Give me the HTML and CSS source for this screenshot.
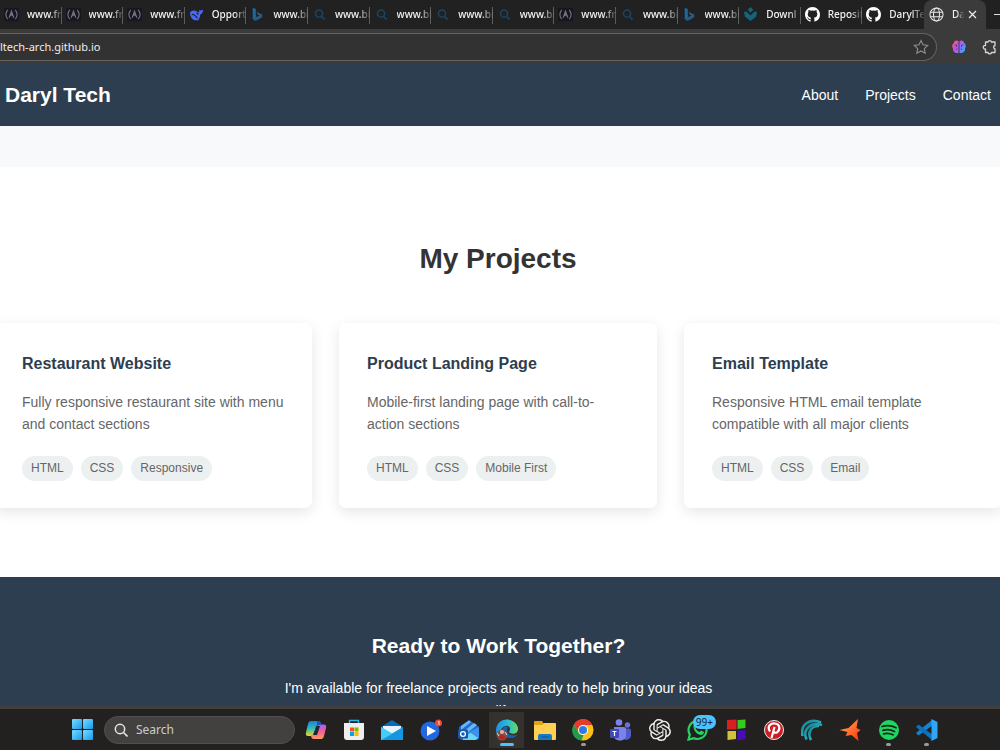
FILE: index.html
```html
<!DOCTYPE html>
<html lang="en">
<head>
<meta charset="utf-8">
<title>Daryl Tech</title>
<link rel="stylesheet" href="styles.css">
</head>
<body>
<svg class="defs" aria-hidden="true">
  <defs>
    <symbol id="fcc" viewBox="0 0 16 14"><rect width="16" height="14" fill="#171722"/><path d="M4 2Q0 7 4 12M12 2q4 5 0 10M5.500 10.500 8 3.500l2.500 7M7 8.500l1-2 1.500 2" fill="none" stroke="#74737c" stroke-width="1.200"/></symbol>
    <symbol id="lens" viewBox="0 0 16 16"><circle cx="7.500" cy="7" r="3.800" fill="none" stroke="#174668" stroke-width="1.600"/><path d="m10 10 3.500 3.500" stroke="#174668" stroke-width="1.700"/></symbol>
    <symbol id="bing" viewBox="0 0 16 16"><path d="m3 1 3 1v9l4-2-2-1-1-3 6 3v3l-7 4-3-2z" fill="#24598a"/><path d="m3 1 3 1v9l-3 2z" fill="#1d6a95"/></symbol>
    <symbol id="github" viewBox="0 0 16 16"><path fill="#fff" d="M8 0C3.580 0 0 3.580 0 8c0 3.540 2.290 6.530 5.470 7.590.4.070.55-.17.55-.38v-1.490c-2.010.37-2.530-.49-2.690-.94-.09-.23-.48-.94-.82-1.130-.28-.15-.68-.52-.01-.53.63-.01 1.080.58 1.230.82.72 1.210 1.870.87 2.330.66.07-.52.28-.87.51-1.070-1.780-.2-3.640-.89-3.640-3.950 0-.87.31-1.590.82-2.150-.08-.2-.36-1.020.08-2.120 0 0 .67-.21 2.200.82a7.400 7.400 0 0 1 4 0c1.530-1.040 2.200-.82 2.200-.82.44 1.100.16 1.920.08 2.120.51.56.82 1.270.82 2.150 0 3.070-1.870 3.750-3.650 3.950.29.25.54.73.54 1.480v2.200c0 .21.15.46.55.38A8 8 0 0 0 16 8c0-4.420-3.580-8-8-8z"/></symbol>
    <linearGradient id="gWin" x2="1" y2="1"><stop stop-color="#7adcff"/><stop offset="1" stop-color="#1599f0"/></linearGradient>
    <linearGradient id="gCopA" x2="0" y2="1"><stop stop-color="#1c7fe8"/><stop offset=".5" stop-color="#2fc0b0"/><stop offset="1" stop-color="#f4d02c"/></linearGradient>
    <linearGradient id="gCopB" x2="0" y2="1"><stop stop-color="#a85cf0"/><stop offset=".5" stop-color="#f0609c"/><stop offset="1" stop-color="#ff9a5a"/></linearGradient>
    <linearGradient id="gEdge" x2="1"><stop stop-color="#1e8fe0"/><stop offset=".5" stop-color="#27b9d8"/><stop offset="1" stop-color="#62dc62"/></linearGradient>
    <linearGradient id="gTeal" x2="1" y2="1"><stop stop-color="#127e92"/><stop offset="1" stop-color="#34d5da"/></linearGradient>
    <linearGradient id="gBrain" x2="1" y2=".6"><stop stop-color="#ff7a4a"/><stop offset=".4" stop-color="#d545e0"/><stop offset="1" stop-color="#3aa5ff"/></linearGradient>
    <linearGradient id="gStar" x2="1" y2="1"><stop stop-color="#ffb95a"/><stop offset="1" stop-color="#ff2d0a"/></linearGradient>
  </defs>
</svg>

<header class="browser">
  <div class="tabs">
    <button class="tab"><svg class="favicon"><use href="#fcc"/></svg><span class="tab-label">www.fr</span></button>
    <button class="tab"><svg class="favicon"><use href="#fcc"/></svg><span class="tab-label">www.fr</span></button>
    <button class="tab"><svg class="favicon"><use href="#fcc"/></svg><span class="tab-label">www.fr</span></button>
    <button class="tab"><svg class="favicon" viewBox="0 0 16 16"><path d="M1 6c2-3 5-3 8-1 1 1 2 1 2 0V3c1 1 2 1 4 0 0 3-1 4-3 5 0 3-1 4-2 5l1 1H6C3 13 1 10 1 6z" fill="#4969fb"/><path d="M3 8c3-1 4 2 6 4M8 6l2 2" fill="none" stroke="#212121" stroke-width="1.200"/></svg><span class="tab-label">Opport</span></button>
    <button class="tab"><svg class="favicon"><use href="#bing"/></svg><span class="tab-label">www.bi</span></button>
    <button class="tab"><svg class="favicon"><use href="#lens"/></svg><span class="tab-label">www.bi</span></button>
    <button class="tab"><svg class="favicon"><use href="#lens"/></svg><span class="tab-label">www.bi</span></button>
    <button class="tab"><svg class="favicon"><use href="#lens"/></svg><span class="tab-label">www.bi</span></button>
    <button class="tab"><svg class="favicon"><use href="#lens"/></svg><span class="tab-label">www.bi</span></button>
    <button class="tab"><svg class="favicon"><use href="#fcc"/></svg><span class="tab-label">www.fr</span></button>
    <button class="tab"><svg class="favicon"><use href="#lens"/></svg><span class="tab-label">www.bi</span></button>
    <button class="tab"><svg class="favicon"><use href="#bing"/></svg><span class="tab-label">www.bi</span></button>
    <button class="tab"><svg class="favicon" viewBox="0 0 16 16"><path d="m8 0 3 3-3 3-3-3z M1 5l3 0 4 4 4-4h3l-1 5-6 5-6-5z" fill="#17637a"/></svg><span class="tab-label">Downl</span></button>
    <button class="tab"><svg class="favicon"><use href="#github"/></svg><span class="tab-label">Reposit</span></button>
    <button class="tab tab-last"><svg class="favicon"><use href="#github"/></svg><span class="tab-label">DarylTe</span></button>
    <div class="tab-active"><svg class="favicon" viewBox="0 0 16 16" fill="none" stroke="#e8e8e8" stroke-width="1.100"><circle cx="8" cy="8" r="7"/><ellipse cx="8" cy="8" rx="3.200" ry="7"/><path d="M1.500 5.500h13M1.500 10.500h13"/></svg><span class="tab-label">Da</span><button class="close" aria-label="Close tab"><svg viewBox="0 0 9 9"><path d="m1 1 7 7M8 1 1 8" stroke="#eee" stroke-width="1.200"/></svg></button></div>
    <button class="minimise" aria-label="Minimise"></button>
  </div>
  <div class="toolbar">
    <div class="address">
      <input class="url" type="text" value="ltech-arch.github.io" aria-label="Address">
      <button class="tool" aria-label="Favourite"><svg viewBox="0 0 16 16"><path d="m8 1.500 2 4.300 4.700.6-3.400 3.200.9 4.700L8 12l-4.200 2.300.9-4.700L1.300 6.400 6 5.800z" fill="none" stroke="#8f8f8f" stroke-width="1.100"/></svg></button>
    </div>
    <button class="tool" aria-label="Brain extension"><svg viewBox="0 0 16 16"><path d="M7.500 2C5 .7 3 2 3 4 1 5 .800 8 2 9.500 1.500 12 4 14.500 7.500 14zM8.500 2C11 .7 13 2 13 4c2 1 2.200 4 1 5.500C14.500 12 12 14.500 8.500 14z" fill="url(#gBrain)"/><path d="M3.500 6h2v2M5 11l1-1.500M12.500 6h-2v2M11 11l-1-1.500" fill="none" stroke="#5b3aa8"/></svg></button>
    <button class="tool" aria-label="Extensions"><svg viewBox="0 0 16 16"><path d="M5 3h2a1.800 1.800 0 0 1 3.500 0H14v3.500a1.800 1.800 0 0 0 0 3.500v3.500h-3.500a1.800 1.800 0 0 1-3.500 0H4.500V10a1.800 1.800 0 1 1 0-3.500V3z" fill="none" stroke="#d6d6d6" stroke-width="1.300" stroke-linejoin="round"/></svg></button>
  </div>
</header>

<main class="site">
  <nav class="nav">
    <span class="logo">Daryl Tech</span>
    <div class="links"><a href="#about">About</a><a href="#projects">Projects</a><a href="#contact">Contact</a></div>
  </nav>
  <div class="band"></div>
  <section class="projects" id="projects">
    <h1>My Projects</h1>
    <div class="cards">
      <article class="card"><h2>Restaurant Website</h2><p>Fully responsive restaurant site with menu and contact sections</p><div class="tags"><span>HTML</span><span>CSS</span><span>Responsive</span></div></article>
      <article class="card"><h2>Product Landing Page</h2><p>Mobile-first landing page with call-to-action sections</p><div class="tags"><span>HTML</span><span>CSS</span><span>Mobile First</span></div></article>
      <article class="card"><h2>Email Template</h2><p>Responsive HTML email template compatible with all major clients</p><div class="tags"><span>HTML</span><span>CSS</span><span>Email</span></div></article>
    </div>
  </section>
  <section class="cta" id="contact">
    <h2>Ready to Work Together?</h2>
    <p>I'm available for freelance projects and ready to help bring your ideas to life.</p>
  </section>
</main>

<footer class="taskbar">
  <button class="start" aria-label="Start"><svg viewBox="0 0 21 21" fill="url(#gWin)"><rect width="10" height="10" rx="1"/><rect x="11" width="10" height="10" rx="1"/><rect y="11" width="10" height="10" rx="1"/><rect x="11" y="11" width="10" height="10" rx="1"/></svg></button>
  <label class="search"><svg viewBox="0 0 14 14"><circle cx="6" cy="6" r="4.700" fill="#4a4a4a" stroke="#e4e4e4" stroke-width="1.500"/><path d="m9.500 9.500 4 4" stroke="#e4e4e4" stroke-width="1.600"/></svg><input type="text" placeholder="Search" aria-label="Search"></label>
  <div class="apps">
    <button class="app" aria-label="Copilot"><svg viewBox="0 0 22 22"><path d="M6 2h7c2 0 2.500 1 3 3l.5 1h-3c-2 0-2.500 1-3 3l-2 6c-.5 1-1 2-3 2H3c-2 0-2.500-1.500-2-3.500L3 5c.5-2 1.500-3 3-3z" fill="url(#gCopA)"/><path d="M16 20H9c-2 0-2.500-1-3-3l1-1c1 0 2-1 2.500-2.500l2-5C12 6.500 13 5.500 15 5.500h4c2 0 2.500 1.500 2 3.500l-2 8c-.5 2-1.500 3-3 3z" fill="url(#gCopB)"/><path d="M12 7h3l-3 9H8z" fill="#1c2536"/><path d="M12 2c3 0 3.500 1 4 4h-4z" fill="#1456c5"/></svg></button>
    <button class="app" aria-label="Store"><svg viewBox="0 0 22 22"><path d="M6.500 5V1.500h9V5" fill="none" stroke="#2ab6e8" stroke-width="1.400"/><path d="M1 4h20v14q0 3-3 3H4q-3 0-3-3z" fill="#efefef"/><path d="M7 8.500h4v4H7z" fill="#f25022"/><path d="M11.500 8.500h4v4h-4z" fill="#7fba00"/><path d="M7 13h4v4H7z" fill="#00a4ef"/><path d="M11.500 13h4v4h-4z" fill="#ffb900"/></svg></button>
    <button class="app" aria-label="Mail"><svg viewBox="0 0 22 22"><path d="M0 8 11 1l11 7v2H0z" fill="#0a6ab3"/><path d="M2 7h18v8H2z" fill="#e8f4fb"/><path d="M0 8v13h22z" fill="#30bdf2"/><path d="M22 8v13H0z" fill="#1596e0"/><path d="m0 8 11 7L0 21z" fill="#42cdf8"/></svg></button>
    <button class="app" aria-label="Media player"><svg viewBox="0 0 22 22"><circle cx="10" cy="12" r="9.500" fill="#2467df"/><path d="M7 7v10l9-5z" fill="#fff"/><circle cx="18.500" cy="4" r="3.500" fill="#e74b38"/><path d="m18 3 1-.8v3.600" fill="none" stroke="#fff" stroke-width=".8"/></svg></button>
    <button class="app" aria-label="Outlook"><svg viewBox="0 0 22 22"><path d="m1 8 10-7 10 7v9q0 4-4 4H5q-4 0-4-4z" fill="#2468d0"/><path d="m3 7 8-5.500L13 3 3 11zM5 13 16 4l3 2L8 15z" fill="#67b9f2"/><path d="m7 15 14-7v9q0 4-4 4H9z" fill="#3c91e9"/><path d="m5 17 8-3 7 5-3 2H5z" fill="#6ad5f5"/><rect y="10.500" width="10" height="9" rx="1" fill="#1459ae"/><circle cx="5" cy="15" r="2.400" fill="none" stroke="#fff" stroke-width="1.300"/></svg></button>
    <button class="app current" aria-label="Edge"><svg viewBox="0 0 22 22"><path d="M0 11C1-3 20-2 22 9c.5 5-4 7-8 5-2-1 0-2 0-4 0-3-3-4-5-3-4 1-5 5-4 12-3-1-5-5-5-8z" fill="url(#gEdge)"/><path d="M9 7C4 10 6 20 15 19c3 0 5-2 6-3-8 2-12-3-9-8z" fill="#1560b7"/><circle cx="6" cy="16" r="5.500" fill="#82524a"/><circle cx="6" cy="13" r="2" fill="#e3b49d"/><path d="M2 19q4-7 8 0l-4 2z" fill="#b62620"/><path d="m1 14 2 3m6-4 2 3" stroke="#d6dce4"/></svg></button>
    <button class="app" aria-label="File Explorer"><svg viewBox="0 0 22 22"><path d="M0 3q0-1 1-1h7l2 3h11v4H0z" fill="#e2a21a"/><path d="M0 6h8l2-2h11q1 0 1 1v15q0 1-1 1H1q-1 0-1-1z" fill="#ffd052"/><path d="M4 21v-4q0-2 2-2h10q2 0 2 2v4z" fill="#1879c4"/><path d="M7 18h8" stroke="#0e538c"/></svg></button>
    <button class="app open" aria-label="Chrome"><svg viewBox="0 0 22 22"><circle cx="11" cy="11" r="10.500" fill="#fbc116"/><path d="M2 5.500C6-2 17-1.500 20.200 6H11L6.500 13.500z" fill="#e33b2e"/><path d="M2 5.500 6.800 14q1.700 2.500 4.700 2L9.500 21.500C1 20-2 12 2 5.500z" fill="#229a4b"/><circle cx="11" cy="11" r="5" fill="#fff"/><circle cx="11" cy="11" r="4" fill="#2c7be5"/></svg></button>
    <button class="app" aria-label="Teams"><svg viewBox="0 0 22 22"><circle cx="9" cy="3.500" r="3.300" fill="#7b83eb"/><circle cx="17.500" cy="6" r="2.700" fill="#6870dd"/><path d="M12 9.500h7q2 0 2 2V17q-1 4-6 4z" fill="#5059c9"/><path d="M4 8h10q2 0 2 2v7c0 6-12 6-12 0z" fill="#7b83eb"/><rect x="0" y="10" width="9" height="9" rx="1" fill="#4049b5"/><path d="M2.500 12.500h4m-2 0V17" stroke="#fff" stroke-width="1.200"/></svg></button>
    <button class="app" aria-label="ChatGPT"><svg viewBox="0 0 24 24"><path fill="#eee" d="M22.282 9.821a5.985 5.985 0 0 0-.516-4.910 6.046 6.046 0 0 0-6.510-2.900A6.065 6.065 0 0 0 4.981 4.182a5.985 5.985 0 0 0-3.998 2.900 6.046 6.046 0 0 0 .743 7.097 5.980 5.980 0 0 0 .511 4.911 6.051 6.051 0 0 0 6.515 2.900A5.985 5.985 0 0 0 13.260 24a6.056 6.056 0 0 0 5.772-4.206 5.990 5.990 0 0 0 3.998-2.900 6.056 6.056 0 0 0-.748-7.073zM13.260 22.430a4.476 4.476 0 0 1-2.876-1.041l.141-.08 4.779-2.758a.795.795 0 0 0 .392-.681v-6.737l2.020 1.169a.071.071 0 0 1 .038.052v5.582a4.504 4.504 0 0 1-4.494 4.494zM3.600 18.304a4.471 4.471 0 0 1-.535-3.014l.142.085 4.783 2.759a.771.771 0 0 0 .780 0l5.843-3.369v2.332a.080.080 0 0 1-.033.062L9.740 19.950a4.499 4.499 0 0 1-6.140-1.646zM2.340 7.896a4.485 4.485 0 0 1 2.366-1.973V11.600a.766.766 0 0 0 .388.677l5.815 3.354-2.020 1.169a.076.076 0 0 1-.071 0l-4.830-2.787A4.504 4.504 0 0 1 2.340 7.872zm16.597 3.855-5.833-3.387L15.119 7.200a.076.076 0 0 1 .071 0l4.830 2.791a4.494 4.494 0 0 1-.676 8.105v-5.678a.79.79 0 0 0-.407-.667zm2.010-3.023-.141-.085-4.774-2.782a.776.776 0 0 0-.785 0L9.409 9.230V6.897a.066.066 0 0 1 .028-.061l4.830-2.787a4.499 4.499 0 0 1 6.680 4.660zM8.307 12.863l-2.020-1.164a.080.080 0 0 1-.038-.057V6.075a4.499 4.499 0 0 1 7.376-3.454l-.142.080L8.704 5.460a.795.795 0 0 0-.393.681zm1.097-2.365 2.602-1.500 2.607 1.500v2.999l-2.597 1.500-2.607-1.500z"/></svg></button>
    <button class="app" aria-label="WhatsApp"><svg viewBox="0 0 22 22"><path d="m1.500 20.500 1.300-5A9 9 0 1 1 7 19.200z" fill="none" stroke="#25d366" stroke-width="2.200"/><path d="M6.500 6c2-2 3 0 3 2l-1 1c1 2 2 3 4 4l1.500-1.500 3 1.500c0 3-3 3.500-5 2.500-3-1-6-5-5.500-9.500z" fill="#25d366"/></svg><span class="badge">99+</span></button>
    <button class="app" aria-label="Colour blocks"><svg viewBox="0 0 22 22"><path d="m2 1 9.500-.5v10H2z" fill="#d82020"/><path d="m12.500 1 8-.5V9l-8 1z" fill="#36c91e"/><path d="M2.500 12h8.500v8l-8.500 1z" fill="#cfc33a"/><path d="M12.500 11.500 20.500 11v9l-8 1.500z" fill="#4a0db5"/></svg></button>
    <button class="app" aria-label="Pinterest"><svg viewBox="0 0 22 22"><circle cx="11" cy="11" r="9.500" fill="#cb1f27" stroke="#eee" stroke-width="1"/><path d="M7 12.500C3.500 7 8 4 12 4.500c5 .5 5.500 6 2.500 8.500-2 1.500-4 .5-4-1M11.500 8 8.500 19" fill="none" stroke="#fff" stroke-width="2.200"/></svg></button>
    <button class="app" aria-label="Waves"><svg viewBox="0 0 22 22" fill="none" stroke="url(#gTeal)" stroke-width="2.600"><path d="M1.500 17C-1 5 9-1 20 3.500"/><path d="M5.500 20.500C1 10 10 2.500 21 6"/><path d="M10 21C5.500 13 11 6.500 18 7"/></svg></button>
    <button class="app" aria-label="Star app"><svg viewBox="0 0 22 22"><path d="m19 0-1.500 9 4 2-3.500 3 1.500 8-7-6-6 1 2-4-8-2 9-2z" fill="url(#gStar)"/></svg></button>
    <button class="app open" aria-label="Spotify"><svg viewBox="0 0 22 22"><circle cx="11" cy="11" r="10" fill="#1ed760"/><path d="M4 7.500c5-1.500 10-1 14 1.300M5 11.300c4-1.200 8-.8 11.500 1.200M5.500 14.800c4-1 6.500-.5 9.500 1" fill="none" stroke="#17251a" stroke-width="1.800" stroke-linecap="round"/></svg></button>
    <button class="app open" aria-label="Visual Studio Code"><svg viewBox="0 0 22 22"><path d="M16 1 0 14 2.500 16.500 17 6z" fill="#1583d4"/><path d="M16 21 0 8 2.500 5.500 17 16z" fill="#0d72bb"/><path d="m15.500 0 6 3v16l-6 3z" fill="#2ea6f4"/></svg></button>
  </div>
</footer>
</body>
</html>
```
FILE: styles.css
```css
* { box-sizing: border-box; }
body {
  margin: 0;
  height: 100vh;
  display: flex;
  flex-direction: column;
  overflow: hidden;
  background: #fff;
  font-family: "Liberation Sans", Arial, sans-serif;
}
button { border: 0; padding: 0; background: none; color: inherit; font: inherit; }
svg { display: block; }
.defs { position: absolute; width: 0; height: 0; }

/* Browser frame */
.browser { flex: none; background: #3b3b3b; color: #f2f2f2; font-family: "Noto Sans", sans-serif; }
.tabs { display: flex; height: 29px; background: #212121; font-size: 10px; font-weight: 500; }
.tab {
  flex: 1 1 0;
  min-width: 0;
  display: flex;
  align-items: center;
  gap: 8px;
  padding: 0 0 1px 4px;
  background: linear-gradient(#5c5c5c, #5c5c5c) right 7px / 1px 17px no-repeat;
}
.tab-last { background: none; }
.favicon { flex: none; width: 15px; height: 15px; }
.tab-label {
  flex: 1;
  overflow: hidden;
  white-space: nowrap;
  text-align: left;
  -webkit-mask-image: linear-gradient(to right, #000 65%, transparent 105%);
  mask-image: linear-gradient(to right, #000 65%, transparent 105%);
}
.tab-active {
  flex: none;
  width: 62px;
  display: flex;
  align-items: center;
  gap: 8px;
  padding: 0 9px 1px 5px;
  border-radius: 8px 8px 0 0;
  background: #3b3b3b;
}
.tab-active .tab-label {
  margin-right: -4px;
  -webkit-mask-image: linear-gradient(to right, #000 40%, transparent);
  mask-image: linear-gradient(to right, #000 40%, transparent);
}
.close { width: 9px; }
.minimise { width: 14px; padding-left: 8px; }
.minimise::before { content: ""; display: block; height: 1px; background: #ddd; }
.toolbar { display: flex; align-items: center; gap: 14px; height: 35px; padding: 1px 3px 0 0; }
.address {
  flex: 1;
  display: flex;
  align-items: center;
  height: 28px;
  padding-right: 7px;
  border: 1px solid #646464;
  border-left: 0;
  border-radius: 0 14px 14px 0;
  background: #323232;
}
.url { flex: 1; min-width: 0; padding: 0 0 1px; border: 0; background: none; color: #eee; font: 11px "Noto Sans", sans-serif; }
.tool { flex: none; width: 16px; height: 16px; }

/* Portfolio page */
.site { flex: 1; min-height: 0; overflow: hidden; }
.nav {
  display: flex;
  align-items: center;
  justify-content: space-between;
  height: 62px;
  padding: 0 9px 0 5px;
  background: #2c3e50;
  color: #fff;
}
.logo { font-size: 21px; font-weight: 700; }
.links { display: flex; gap: 27px; font-size: 14px; }
.links a { color: #fff; text-decoration: none; }
.band { height: 41px; background: #f8f9fa; }
.projects { padding: 70px 0 69px; }
h1, h2, p { margin: 0; }
h1 { padding-right: 4px; font-size: 28px; line-height: 44px; text-align: center; color: #333; }
.cards { display: grid; grid-template-columns: repeat(3, 1fr); gap: 27px; margin: 42px -2px 0 -6px; }
.card { padding: 28px 28px 27px; border-radius: 7px; background: #fff; box-shadow: 0 4px 14px rgba(0, 0, 0, .1); }
.card h2 { font-size: 16px; line-height: 26px; color: #2c3e50; }
.card p { margin: 14px 0 21px; font-size: 14px; line-height: 22px; color: #666; }
.tags { display: flex; gap: 8px; }
.tags span { padding: 0 9px; border-radius: 13px; background: #ecf0f1; color: #666; font-size: 12px; line-height: 25px; }
.cta { padding: 52px 3px 52px 0; background: #2c3e50; color: #fff; text-align: center; }
.cta h2 { font-size: 21px; line-height: 34px; }
.cta p { max-width: 440px; margin: 14px auto 0; font-size: 14px; line-height: 23px; }

/* Taskbar */
.taskbar {
  flex: none;
  display: flex;
  align-items: center;
  height: 44px;
  padding: 0 54px 0 72px;
  border-top: 3px solid #42403f;
  background: #23211f;
}
.start { width: 21px; }
.search {
  display: flex;
  align-items: center;
  gap: 8px;
  width: 191px;
  height: 28px;
  margin: 0 2px 0 11px;
  padding: 0 9px;
  border: 1px solid #505050;
  border-radius: 14px;
  background: #424140;
}
.search svg { flex: none; width: 14px; }
.search input { width: 100%; padding: 0; border: 0; background: none; color: #ddd; font: 12px "Noto Sans", sans-serif; }
.search input::placeholder { color: #ccc; }
.apps { flex: 1; display: flex; }
.app { position: relative; flex: 1; display: flex; justify-content: center; align-items: center; height: 36px; }
.app svg { width: 22px; height: 22px; }
.current { background: linear-gradient(#35312d, #35312d) center / 35px 36px no-repeat; }
.current::after, .open::after {
  content: "";
  position: absolute;
  bottom: 2px;
  width: 5px;
  height: 3px;
  border-radius: 2px;
  background: #9b9998;
}
.current::after { width: 14px; background: #4cc2ff; }
.badge {
  position: absolute;
  top: 3px;
  left: 14px;
  padding: 0 3px;
  border-radius: 7px;
  background: #4cc2ff;
  color: #15242e;
  font: 10px/14px "Noto Sans", sans-serif;
}
```
